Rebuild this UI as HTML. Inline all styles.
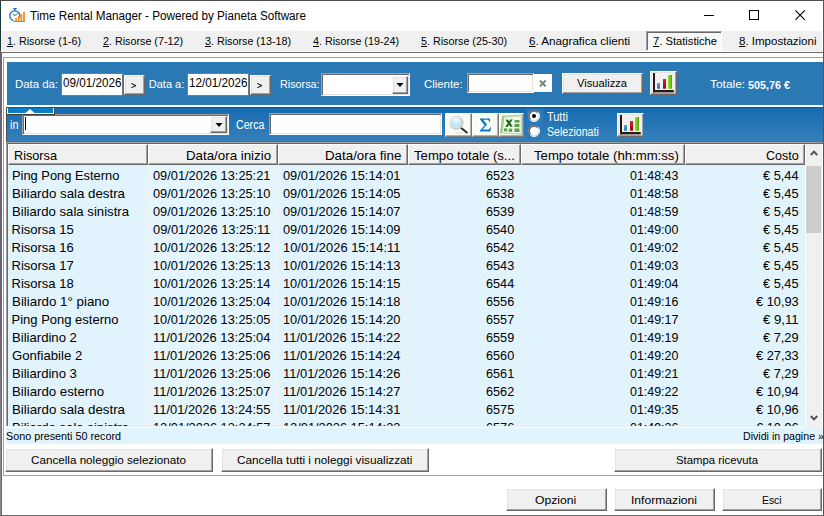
<!DOCTYPE html>
<html><head><meta charset="utf-8"><title>Time Rental Manager</title>
<style>
html,body{margin:0;padding:0;background:#fff;}
body{width:824px;height:516px;overflow:hidden;position:relative;font-family:"Liberation Sans",sans-serif;}
#w{position:absolute;left:0;top:0;width:824px;height:516px;overflow:hidden;background:#fff;}
#w div,#w span.t,#w svg{position:absolute;}
.t{line-height:16px;white-space:pre;transform-origin:0 0;}
.t u{text-decoration:underline;text-decoration-thickness:1px;text-underline-offset:0.5px;}
.btn{background:#f0f0f0;box-sizing:border-box;border:1px solid;border-color:#fff #696969 #696969 #fff;box-shadow:inset -1px -1px 0 #a0a0a0,inset 1px 1px 0 #e3e3e3;}
.ibtn{background:#fbfbf5;box-sizing:border-box;border:1px solid;border-color:#fff #7c7c7c #7c7c7c #fff;box-shadow:inset -1px -1px 0 #b0b0ac;}
.sunk{background:#fff;box-sizing:border-box;border:1px solid;border-color:#a0a0a0 #fff #fff #a0a0a0;box-shadow:inset 1px 1px 0 #696969,inset -1px -1px 0 #e3e3e3;}
.hd{background:#f0f0f0;box-sizing:border-box;border:1px solid;border-color:#fff #696969 #696969 #fff;box-shadow:inset -1px -1px 0 #a0a0a0;}
</style></head>
<body><div id="w">
<div style="left:0px;top:0px;width:824px;height:1px;background:#4d4d4d;"></div>
<div style="left:0px;top:1px;width:1px;height:515px;background:linear-gradient(#1c3a3c 0,#1c3a3c 9%,#6b6072 10%,#6b6072 60%,#8a8a8a 88%);"></div>
<div style="left:823px;top:0px;width:1px;height:516px;background:#555;"></div>
<div style="left:0px;top:515px;width:824px;height:1px;background:#696969;"></div>
<div style="left:1px;top:31px;width:821px;height:20px;background:#f0f0f0;"></div>
<div style="left:646px;top:31px;width:76px;height:20px;background:#f8f8f8;box-sizing:border-box;border:1px solid;border-color:#a0a0a0 #fff #fff #a0a0a0;box-shadow:inset 1px 1px 0 #696969;"></div>
<div style="left:1px;top:52px;width:822px;height:1px;background:#696969;"></div>
<div style="left:1px;top:52px;width:1px;height:463px;background:#696969;"></div>
<div style="left:3px;top:57px;width:820px;height:1px;background:#a0a0a0;"></div>
<div style="left:3px;top:57px;width:1px;height:419px;background:#a0a0a0;"></div>
<div style="left:3px;top:475px;width:820px;height:1px;background:#a0a0a0;"></div>
<div style="left:7px;top:62px;width:816px;height:43px;background:#2a78b4;"></div>
<div style="left:6px;top:107px;width:817px;height:1px;background:#4a4a4a;"></div>
<div style="left:6px;top:107px;width:1px;height:35px;background:#4a4a4a;"></div>
<div style="left:7px;top:108px;width:816px;height:33px;background:linear-gradient(#186bb2,#3580b9);"></div>
<div style="left:7px;top:108px;width:47px;height:6px;background:#0b7cc6;box-sizing:border-box;border:1px solid #fff;border-top:0;"></div>
<div style="left:54px;top:108px;width:1px;height:7px;background:#4a4a4a;"></div>
<svg style="left:25px;top:109px" width="10" height="4" viewBox="0 0 10 4"><path d="M0.5 4 L5 0 L9.5 4Z" fill="#fffff4"/></svg>
<div style="left:7px;top:114px;width:47px;height:1px;background:#3a3a3a;"></div>
<div style="left:7px;top:141px;width:816px;height:1px;background:#696969;"></div>
<div style="left:6px;top:142px;width:817px;height:1px;background:#a0a0a0;"></div>
<div style="left:7px;top:143px;width:816px;height:1px;background:#696969;"></div>
<div style="left:61px;top:73px;width:62px;height:23px;background:#fff;box-sizing:border-box;border:1px solid #7a7a7a;"></div>
<div class="btn" style="left:124px;top:75px;width:21px;height:20px;"></div>
<div style="left:187px;top:73px;width:62px;height:23px;background:#fff;box-sizing:border-box;border:1px solid #7a7a7a;"></div>
<div class="btn" style="left:250px;top:75px;width:21px;height:20px;"></div>
<svg style="left:130px;top:82px" width="8" height="7" viewBox="0 0 8 7"><path d="M1.3 1.5 L6 3.6 L1.3 5.7" fill="none" stroke="#000" stroke-width="1"/></svg>
<svg style="left:256px;top:82px" width="8" height="7" viewBox="0 0 8 7"><path d="M1.3 1.5 L6 3.6 L1.3 5.7" fill="none" stroke="#000" stroke-width="1"/></svg>
<div class="sunk" style="left:321px;top:73px;width:89px;height:23px;"></div>
<div class="btn" style="left:392px;top:76px;width:16px;height:18px;"></div>
<svg style="left:396px;top:83px" width="8" height="4" viewBox="0 0 8 4"><path d="M0.5 0 L7.5 0 L4 4Z" fill="#000"/></svg>
<div class="sunk" style="left:467px;top:73px;width:67px;height:20px;"></div>
<div style="left:534px;top:74px;width:18px;height:18px;background:#fff;"></div>
<svg style="left:539px;top:80px" width="8" height="7" viewBox="0 0 8 7"><path d="M1 0.5 L6.6 6.5 M6.6 0.5 L1 6.5" fill="none" stroke="#6f8670" stroke-width="1.9"/></svg>
<div class="btn" style="left:562px;top:73px;width:81px;height:21px;"></div>
<div class="btn" style="left:650px;top:71px;width:27px;height:24px;"></div>
<svg style="left:650px;top:71px" width="27" height="24" viewBox="0 0 27 24">
<defs><linearGradient id="g1" x1="0" x2="1"><stop offset="0" stop-color="#96e022"/><stop offset="1" stop-color="#55a812"/></linearGradient>
<linearGradient id="b1" x1="0" x2="0" y1="0" y2="1"><stop offset="0" stop-color="#52acdc"/><stop offset="1" stop-color="#1a78b0"/></linearGradient>
<linearGradient id="r1" x1="0" x2="0" y1="0" y2="1"><stop offset="0" stop-color="#d82424"/><stop offset="1" stop-color="#8e0808"/></linearGradient></defs>
<rect x="3" y="2" width="2" height="19.4" fill="#2a1818"/><rect x="3" y="19" width="20.8" height="2.4" fill="#2a1818"/>
<rect x="7" y="12" width="3" height="5.7" fill="url(#b1)"/><rect x="13" y="8" width="3" height="9.7" fill="url(#r1)"/>
<path d="M18 5 L19 4 L22 4 L22 17.8 L18 17.8Z" fill="url(#g1)"/></svg>
<div class="sunk" style="left:22px;top:114px;width:207px;height:21px;"></div>
<div style="left:22px;top:114px;width:33px;height:1px;background:#3a3a3a;"></div>
<div class="btn" style="left:210px;top:116px;width:17px;height:17px;"></div>
<svg style="left:214.6px;top:122.8px" width="8" height="4" viewBox="0 0 8 4"><path d="M0.5 0 L7.5 0 L4 4Z" fill="#000"/></svg>
<div style="left:25px;top:117px;width:1px;height:13px;background:#000;"></div>
<div class="sunk" style="left:269px;top:113px;width:173px;height:22px;"></div>
<div class="ibtn" style="left:445px;top:113px;width:27px;height:24px;"></div>
<div class="ibtn" style="left:472px;top:113px;width:27px;height:24px;"></div>
<div class="ibtn" style="left:499px;top:113px;width:25px;height:24px;"></div>
<svg style="left:445px;top:113px" width="27" height="24" viewBox="0 0 27 24">
<defs><radialGradient id="lens" cx="0.5" cy="0.3" r="0.75"><stop offset="0" stop-color="#eef9fe"/><stop offset="0.55" stop-color="#bde5f6"/><stop offset="1" stop-color="#cfeaf6"/></radialGradient>
<linearGradient id="ring" x1="0" y1="0" x2="1" y2="1"><stop offset="0" stop-color="#ececec"/><stop offset="1" stop-color="#c4c4c4"/></linearGradient></defs>
<ellipse cx="14" cy="19.7" rx="4.6" ry="0.8" fill="#e2e2de"/>
<path d="M16.2 15 L21.8 19.6" stroke="#2b2b2b" stroke-width="2" stroke-linecap="round"/>
<circle cx="11.3" cy="9.7" r="6.3" fill="url(#lens)" stroke="url(#ring)" stroke-width="1.9"/>
<path d="M7.2 8.2 A4.4 4.4 0 0 1 15.4 8.2 A6 3 0 0 0 7.2 8.2Z" fill="#f4fbfe" opacity="0.8"/>
</svg>
<svg style="left:472px;top:113px" width="27" height="24" viewBox="0 0 27 24"><path d="M8 5.6 H18 V9 H17.2 C17 7.4 16.4 6.8 14.6 6.8 H11.2 L15 11.6 L10.6 16.6 H15 C17.2 16.6 17.8 15.8 18.2 14.2 H19 L18.4 18.4 H8 V17.6 L12.6 12.2 L8 6.4 Z" fill="#0b79c8"/></svg>
<svg style="left:498px;top:113px" width="26" height="24" viewBox="0 0 26 24">
<path d="M4.2 2.6 L24 1.4 L24 21.8 L2.2 20.4 Z" fill="#bcd9a5"/>
<path d="M2.2 20.4 L4.2 2.6 L6 3.4 L4.4 19.6 Z" fill="#9cc881"/>
<path d="M6.4 4.6 L22.8 3.4 L22.8 20.4 L4.8 19.2 Z" fill="#f3f8ee"/>
<path d="M7.4 6.8 L10 6.6 L14.8 13.6 L12.2 13.8 Z M12.4 6.5 L14.8 6.3 L9.6 14 L7.2 13.9 Z" fill="#236a23"/>
<g fill="#55a54f"><rect x="16.5" y="7" width="5" height="2.6"/><rect x="16.5" y="11" width="5" height="3"/>
<rect x="16.5" y="15.5" width="5" height="3.5"/><rect x="10.6" y="15.6" width="3.6" height="3.2"/><rect x="6" y="15.4" width="3.2" height="3"/></g>
</svg>
<div style="left:527px;top:109px;width:16px;height:30px;background:#2d78b6;"></div>
<svg style="left:528px;top:110px" width="12" height="12" viewBox="0 0 12 12">
<circle cx="6" cy="6" r="5" fill="#fff"/>
<path d="M2.1 9.9 A5.5 5.5 0 0 1 9.9 2.1" fill="none" stroke="#808080" stroke-width="1"/>
<path d="M2.8 9.2 A4.5 4.5 0 0 1 9.2 2.8" fill="none" stroke="#505050" stroke-width="0.9"/>
<path d="M9.9 2.1 A5.5 5.5 0 0 1 2.1 9.9" fill="none" stroke="#fff" stroke-width="1"/>
<path d="M9.2 2.8 A4.5 4.5 0 0 1 2.8 9.2" fill="none" stroke="#e3e3e3" stroke-width="1"/>
<circle cx="6" cy="6" r="2" fill="#000"/></svg>
<svg style="left:528px;top:125px" width="12" height="12" viewBox="0 0 12 12">
<circle cx="6" cy="6" r="5" fill="#fff"/>
<path d="M2.1 9.9 A5.5 5.5 0 0 1 9.9 2.1" fill="none" stroke="#808080" stroke-width="1"/>
<path d="M2.8 9.2 A4.5 4.5 0 0 1 9.2 2.8" fill="none" stroke="#505050" stroke-width="0.9"/>
<path d="M9.9 2.1 A5.5 5.5 0 0 1 2.1 9.9" fill="none" stroke="#fff" stroke-width="1"/>
<path d="M9.2 2.8 A4.5 4.5 0 0 1 2.8 9.2" fill="none" stroke="#e3e3e3" stroke-width="1"/>
</svg>
<div class="btn" style="left:617px;top:113px;width:27px;height:24px;"></div>
<svg style="left:617px;top:113px" width="27" height="24" viewBox="0 0 27 24">
<defs><linearGradient id="g2" x1="0" x2="1"><stop offset="0" stop-color="#96e022"/><stop offset="1" stop-color="#55a812"/></linearGradient>
<linearGradient id="b2" x1="0" x2="0" y1="0" y2="1"><stop offset="0" stop-color="#52acdc"/><stop offset="1" stop-color="#1a78b0"/></linearGradient>
<linearGradient id="r2" x1="0" x2="0" y1="0" y2="1"><stop offset="0" stop-color="#d82424"/><stop offset="1" stop-color="#8e0808"/></linearGradient></defs>
<rect x="3" y="2" width="2" height="19.4" fill="#2a1818"/><rect x="3" y="19" width="20.8" height="2.4" fill="#2a1818"/>
<rect x="7" y="12" width="3" height="5.7" fill="url(#b2)"/><rect x="13" y="8" width="3" height="9.7" fill="url(#r2)"/>
<path d="M18 5 L19 4 L22 4 L22 17.8 L18 17.8Z" fill="url(#g2)"/></svg>
<div style="left:6px;top:143px;width:1px;height:283px;background:#a0a0a0;"></div>
<div style="left:7px;top:144px;width:1px;height:282px;background:#696969;"></div>
<div style="left:8px;top:165px;width:140px;height:261px;background:#e1f3fd;"></div>
<div class="hd" style="left:8px;top:144px;width:140px;height:21px;"></div>
<div style="left:148px;top:165px;width:130px;height:261px;background:#e5f5fd;"></div>
<div class="hd" style="left:148px;top:144px;width:130px;height:21px;"></div>
<div style="left:278px;top:165px;width:130px;height:261px;background:#e1f3fd;"></div>
<div class="hd" style="left:278px;top:144px;width:130px;height:21px;"></div>
<div style="left:408px;top:165px;width:113px;height:261px;background:#e1f3fd;"></div>
<div class="hd" style="left:408px;top:144px;width:113px;height:21px;"></div>
<div style="left:521px;top:165px;width:164px;height:261px;background:#e1f3fd;"></div>
<div class="hd" style="left:521px;top:144px;width:164px;height:21px;"></div>
<div style="left:685px;top:165px;width:120px;height:261px;background:#e1f3fd;"></div>
<div class="hd" style="left:685px;top:144px;width:120px;height:21px;"></div>
<div style="left:8px;top:183px;width:797px;height:1px;background:#eef0f1;"></div>
<div style="left:8px;top:201px;width:797px;height:1px;background:#eef0f1;"></div>
<div style="left:8px;top:219px;width:797px;height:1px;background:#eef0f1;"></div>
<div style="left:8px;top:237px;width:797px;height:1px;background:#eef0f1;"></div>
<div style="left:8px;top:255px;width:797px;height:1px;background:#eef0f1;"></div>
<div style="left:8px;top:273px;width:797px;height:1px;background:#eef0f1;"></div>
<div style="left:8px;top:291px;width:797px;height:1px;background:#eef0f1;"></div>
<div style="left:8px;top:309px;width:797px;height:1px;background:#eef0f1;"></div>
<div style="left:8px;top:327px;width:797px;height:1px;background:#eef0f1;"></div>
<div style="left:8px;top:345px;width:797px;height:1px;background:#eef0f1;"></div>
<div style="left:8px;top:363px;width:797px;height:1px;background:#eef0f1;"></div>
<div style="left:8px;top:381px;width:797px;height:1px;background:#eef0f1;"></div>
<div style="left:8px;top:399px;width:797px;height:1px;background:#eef0f1;"></div>
<div style="left:8px;top:417px;width:797px;height:1px;background:#eef0f1;"></div>
<div style="left:148px;top:165px;width:1px;height:261px;background:#eef0f1;"></div>
<div style="left:278px;top:165px;width:1px;height:261px;background:#eef0f1;"></div>
<div style="left:408px;top:165px;width:1px;height:261px;background:#eef0f1;"></div>
<div style="left:521px;top:165px;width:1px;height:261px;background:#eef0f1;"></div>
<div style="left:685px;top:165px;width:1px;height:261px;background:#eef0f1;"></div>
<div style="left:8px;top:426px;width:797px;height:1px;background:#e6eef2;"></div>
<div style="left:805px;top:144px;width:17px;height:284px;background:#f0f0f0;"></div>
<div style="left:805px;top:144px;width:1px;height:284px;background:#fff;"></div>
<div style="left:806px;top:166px;width:15px;height:67px;background:#cdcdcd;"></div>
<svg style="left:810px;top:150px" width="8" height="6" viewBox="0 0 8 6"><path d="M0.8 5 L4 1.6 L7.2 5" fill="none" stroke="#505050" stroke-width="1.9"/></svg>
<svg style="left:810px;top:415px" width="8" height="6" viewBox="0 0 8 6"><path d="M0.8 1 L4 4.4 L7.2 1" fill="none" stroke="#505050" stroke-width="1.9"/></svg>
<div style="left:6px;top:428px;width:817px;height:16px;background:#e1f3fd;"></div>
<div class="btn" style="left:5px;top:448px;width:208px;height:24px;"></div>
<div class="btn" style="left:221px;top:448px;width:208px;height:24px;"></div>
<div class="btn" style="left:614px;top:448px;width:208px;height:24px;"></div>
<div class="btn" style="left:506px;top:488px;width:101px;height:23px;"></div>
<div class="btn" style="left:614px;top:488px;width:101px;height:23px;"></div>
<div class="btn" style="left:722px;top:488px;width:100px;height:23px;"></div>
<svg style="left:8px;top:7px" width="19" height="16" viewBox="8 7 19 16">
<circle cx="14.8" cy="15.8" r="5" fill="#fff" stroke="#1b6fc2" stroke-width="1.3"/>
<rect x="13.3" y="8" width="3.4" height="1.3" fill="#1b6fc2"/><rect x="14.2" y="9" width="1.4" height="1.6" fill="#1b6fc2"/>
<path d="M12.8 14 L14.8 15.6 L17.6 13.4" fill="none" stroke="#2a4a60" stroke-width="0.9"/>
<rect x="13.5" y="18" width="13" height="4" fill="#fff"/>
<g fill="#f7901e"><rect x="15.2" y="17.8" width="1.8" height="3"/><rect x="17.9" y="16" width="1.8" height="4.8"/>
<rect x="20.5" y="14" width="1.8" height="6.8"/><rect x="23.1" y="12" width="1.8" height="8.8"/></g>
<rect x="13.6" y="20.9" width="11.6" height="0.9" fill="#3a7ec4"/>
</svg>
<div style="left:704px;top:15px;width:10px;height:1px;background:#000;"></div>
<div style="left:749px;top:10px;width:10px;height:10px;box-sizing:border-box;border:1px solid #000;"></div>
<svg style="left:794px;top:9px" width="12" height="12" viewBox="0 0 12 12"><path d="M1.4 1.4 L10.8 10.8 M10.8 1.4 L1.4 10.8" stroke="#000" stroke-width="1.1" fill="none"/></svg>
<div style="left:0;top:0;width:805px;height:426px;overflow:hidden;">
<span class="t" id="t28" style="left:11.50px;top:167.50px;font-size:13px;color:#000;transform:scaleX(0.9907);">Ping Pong Esterno</span>
<span class="t" id="t29" style="left:153.10px;top:167.50px;font-size:13px;color:#000;transform:scaleX(0.9842);">09/01/2026 13:25:21</span>
<span class="t" id="t30" style="left:283.10px;top:167.50px;font-size:13px;color:#000;transform:scaleX(0.9842);">09/01/2026 15:14:01</span>
<span class="t" id="t31" style="left:486.30px;top:167.50px;font-size:13px;color:#000;transform:scaleX(0.9750);">6523</span>
<span class="t" id="t32" style="left:630.20px;top:167.50px;font-size:13px;color:#000;transform:scaleX(0.9563);">01:48:43</span>
<span class="t" id="t33" style="left:763.10px;top:167.50px;font-size:13px;color:#000;transform:scaleX(0.9846);">€ 5,44</span>
<span class="t" id="t34" style="left:11.50px;top:185.50px;font-size:13px;color:#000;transform:scaleX(1.0220);">Biliardo sala destra</span>
<span class="t" id="t35" style="left:153.10px;top:185.50px;font-size:13px;color:#000;transform:scaleX(0.9842);">09/01/2026 13:25:10</span>
<span class="t" id="t36" style="left:283.10px;top:185.50px;font-size:13px;color:#000;transform:scaleX(0.9842);">09/01/2026 15:14:05</span>
<span class="t" id="t37" style="left:486.30px;top:185.50px;font-size:13px;color:#000;transform:scaleX(0.9750);">6538</span>
<span class="t" id="t38" style="left:630.20px;top:185.50px;font-size:13px;color:#000;transform:scaleX(0.9563);">01:48:58</span>
<span class="t" id="t39" style="left:763.10px;top:185.50px;font-size:13px;color:#000;transform:scaleX(0.9846);">€ 5,45</span>
<span class="t" id="t40" style="left:11.50px;top:203.50px;font-size:13px;color:#000;transform:scaleX(1.0120);">Biliardo sala sinistra</span>
<span class="t" id="t41" style="left:153.10px;top:203.50px;font-size:13px;color:#000;transform:scaleX(0.9842);">09/01/2026 13:25:10</span>
<span class="t" id="t42" style="left:283.10px;top:203.50px;font-size:13px;color:#000;transform:scaleX(0.9842);">09/01/2026 15:14:07</span>
<span class="t" id="t43" style="left:486.30px;top:203.50px;font-size:13px;color:#000;transform:scaleX(0.9750);">6539</span>
<span class="t" id="t44" style="left:630.20px;top:203.50px;font-size:13px;color:#000;transform:scaleX(0.9563);">01:48:59</span>
<span class="t" id="t45" style="left:763.10px;top:203.50px;font-size:13px;color:#000;transform:scaleX(0.9846);">€ 5,45</span>
<span class="t" id="t46" style="left:11.50px;top:221.50px;font-size:13px;color:#000;">Risorsa 15</span>
<span class="t" id="t47" style="left:153.10px;top:221.50px;font-size:13px;color:#000;transform:scaleX(0.9922);">09/01/2026 13:25:11</span>
<span class="t" id="t48" style="left:283.10px;top:221.50px;font-size:13px;color:#000;transform:scaleX(0.9842);">09/01/2026 15:14:09</span>
<span class="t" id="t49" style="left:486.30px;top:221.50px;font-size:13px;color:#000;transform:scaleX(0.9750);">6540</span>
<span class="t" id="t50" style="left:630.20px;top:221.50px;font-size:13px;color:#000;transform:scaleX(0.9563);">01:49:00</span>
<span class="t" id="t51" style="left:763.10px;top:221.50px;font-size:13px;color:#000;transform:scaleX(0.9846);">€ 5,45</span>
<span class="t" id="t52" style="left:11.50px;top:239.50px;font-size:13px;color:#000;">Risorsa 16</span>
<span class="t" id="t53" style="left:153.10px;top:239.50px;font-size:13px;color:#000;transform:scaleX(0.9842);">10/01/2026 13:25:12</span>
<span class="t" id="t54" style="left:283.10px;top:239.50px;font-size:13px;color:#000;transform:scaleX(0.9922);">10/01/2026 15:14:11</span>
<span class="t" id="t55" style="left:486.30px;top:239.50px;font-size:13px;color:#000;transform:scaleX(0.9750);">6542</span>
<span class="t" id="t56" style="left:630.20px;top:239.50px;font-size:13px;color:#000;transform:scaleX(0.9563);">01:49:02</span>
<span class="t" id="t57" style="left:763.10px;top:239.50px;font-size:13px;color:#000;transform:scaleX(0.9846);">€ 5,45</span>
<span class="t" id="t58" style="left:11.50px;top:257.50px;font-size:13px;color:#000;">Risorsa 17</span>
<span class="t" id="t59" style="left:153.10px;top:257.50px;font-size:13px;color:#000;transform:scaleX(0.9842);">10/01/2026 13:25:13</span>
<span class="t" id="t60" style="left:283.10px;top:257.50px;font-size:13px;color:#000;transform:scaleX(0.9842);">10/01/2026 15:14:13</span>
<span class="t" id="t61" style="left:486.30px;top:257.50px;font-size:13px;color:#000;transform:scaleX(0.9750);">6543</span>
<span class="t" id="t62" style="left:630.20px;top:257.50px;font-size:13px;color:#000;transform:scaleX(0.9563);">01:49:03</span>
<span class="t" id="t63" style="left:763.10px;top:257.50px;font-size:13px;color:#000;transform:scaleX(0.9846);">€ 5,45</span>
<span class="t" id="t64" style="left:11.50px;top:275.50px;font-size:13px;color:#000;">Risorsa 18</span>
<span class="t" id="t65" style="left:153.10px;top:275.50px;font-size:13px;color:#000;transform:scaleX(0.9842);">10/01/2026 13:25:14</span>
<span class="t" id="t66" style="left:283.10px;top:275.50px;font-size:13px;color:#000;transform:scaleX(0.9842);">10/01/2026 15:14:15</span>
<span class="t" id="t67" style="left:486.30px;top:275.50px;font-size:13px;color:#000;transform:scaleX(0.9750);">6544</span>
<span class="t" id="t68" style="left:630.20px;top:275.50px;font-size:13px;color:#000;transform:scaleX(0.9563);">01:49:04</span>
<span class="t" id="t69" style="left:763.10px;top:275.50px;font-size:13px;color:#000;transform:scaleX(0.9846);">€ 5,45</span>
<span class="t" id="t70" style="left:11.50px;top:293.50px;font-size:13px;color:#000;transform:scaleX(1.0240);">Biliardo 1° piano</span>
<span class="t" id="t71" style="left:153.10px;top:293.50px;font-size:13px;color:#000;transform:scaleX(0.9842);">10/01/2026 13:25:04</span>
<span class="t" id="t72" style="left:283.10px;top:293.50px;font-size:13px;color:#000;transform:scaleX(0.9842);">10/01/2026 15:14:18</span>
<span class="t" id="t73" style="left:486.30px;top:293.50px;font-size:13px;color:#000;transform:scaleX(0.9750);">6556</span>
<span class="t" id="t74" style="left:630.20px;top:293.50px;font-size:13px;color:#000;transform:scaleX(0.9563);">01:49:16</span>
<span class="t" id="t75" style="left:756.00px;top:293.50px;font-size:13px;color:#000;transform:scaleX(0.9844);">€ 10,93</span>
<span class="t" id="t76" style="left:11.50px;top:311.50px;font-size:13px;color:#000;">Ping Pong esterno</span>
<span class="t" id="t77" style="left:153.10px;top:311.50px;font-size:13px;color:#000;transform:scaleX(0.9842);">10/01/2026 13:25:05</span>
<span class="t" id="t78" style="left:283.10px;top:311.50px;font-size:13px;color:#000;transform:scaleX(0.9842);">10/01/2026 15:14:20</span>
<span class="t" id="t79" style="left:486.30px;top:311.50px;font-size:13px;color:#000;transform:scaleX(0.9750);">6557</span>
<span class="t" id="t80" style="left:630.20px;top:311.50px;font-size:13px;color:#000;transform:scaleX(0.9563);">01:49:17</span>
<span class="t" id="t81" style="left:763.10px;top:311.50px;font-size:13px;color:#000;transform:scaleX(1.0117);">€ 9,11</span>
<span class="t" id="t82" style="left:11.50px;top:329.50px;font-size:13px;color:#000;transform:scaleX(1.0089);">Biliardino 2</span>
<span class="t" id="t83" style="left:153.10px;top:329.50px;font-size:13px;color:#000;transform:scaleX(0.9922);">11/01/2026 13:25:04</span>
<span class="t" id="t84" style="left:283.10px;top:329.50px;font-size:13px;color:#000;transform:scaleX(0.9922);">11/01/2026 15:14:22</span>
<span class="t" id="t85" style="left:486.30px;top:329.50px;font-size:13px;color:#000;transform:scaleX(0.9750);">6559</span>
<span class="t" id="t86" style="left:630.20px;top:329.50px;font-size:13px;color:#000;transform:scaleX(0.9563);">01:49:19</span>
<span class="t" id="t87" style="left:763.10px;top:329.50px;font-size:13px;color:#000;transform:scaleX(0.9846);">€ 7,29</span>
<span class="t" id="t88" style="left:11.50px;top:347.50px;font-size:13px;color:#000;transform:scaleX(1.0117);">Gonfiabile 2</span>
<span class="t" id="t89" style="left:153.10px;top:347.50px;font-size:13px;color:#000;transform:scaleX(0.9922);">11/01/2026 13:25:06</span>
<span class="t" id="t90" style="left:283.10px;top:347.50px;font-size:13px;color:#000;transform:scaleX(0.9922);">11/01/2026 15:14:24</span>
<span class="t" id="t91" style="left:486.30px;top:347.50px;font-size:13px;color:#000;transform:scaleX(0.9750);">6560</span>
<span class="t" id="t92" style="left:630.20px;top:347.50px;font-size:13px;color:#000;transform:scaleX(0.9563);">01:49:20</span>
<span class="t" id="t93" style="left:756.00px;top:347.50px;font-size:13px;color:#000;transform:scaleX(0.9844);">€ 27,33</span>
<span class="t" id="t94" style="left:11.50px;top:365.50px;font-size:13px;color:#000;transform:scaleX(1.0089);">Biliardino 3</span>
<span class="t" id="t95" style="left:153.10px;top:365.50px;font-size:13px;color:#000;transform:scaleX(0.9922);">11/01/2026 13:25:06</span>
<span class="t" id="t96" style="left:283.10px;top:365.50px;font-size:13px;color:#000;transform:scaleX(0.9922);">11/01/2026 15:14:26</span>
<span class="t" id="t97" style="left:486.30px;top:365.50px;font-size:13px;color:#000;transform:scaleX(0.9750);">6561</span>
<span class="t" id="t98" style="left:630.20px;top:365.50px;font-size:13px;color:#000;transform:scaleX(0.9563);">01:49:21</span>
<span class="t" id="t99" style="left:763.10px;top:365.50px;font-size:13px;color:#000;transform:scaleX(0.9846);">€ 7,29</span>
<span class="t" id="t100" style="left:11.50px;top:383.50px;font-size:13px;color:#000;transform:scaleX(1.0185);">Biliardo esterno</span>
<span class="t" id="t101" style="left:153.10px;top:383.50px;font-size:13px;color:#000;transform:scaleX(0.9922);">11/01/2026 13:25:07</span>
<span class="t" id="t102" style="left:283.10px;top:383.50px;font-size:13px;color:#000;transform:scaleX(0.9922);">11/01/2026 15:14:27</span>
<span class="t" id="t103" style="left:486.30px;top:383.50px;font-size:13px;color:#000;transform:scaleX(0.9750);">6562</span>
<span class="t" id="t104" style="left:630.20px;top:383.50px;font-size:13px;color:#000;transform:scaleX(0.9563);">01:49:22</span>
<span class="t" id="t105" style="left:756.00px;top:383.50px;font-size:13px;color:#000;transform:scaleX(0.9844);">€ 10,94</span>
<span class="t" id="t106" style="left:11.50px;top:401.50px;font-size:13px;color:#000;transform:scaleX(1.0220);">Biliardo sala destra</span>
<span class="t" id="t107" style="left:153.10px;top:401.50px;font-size:13px;color:#000;transform:scaleX(0.9922);">11/01/2026 13:24:55</span>
<span class="t" id="t108" style="left:283.10px;top:401.50px;font-size:13px;color:#000;transform:scaleX(0.9922);">11/01/2026 15:14:31</span>
<span class="t" id="t109" style="left:486.30px;top:401.50px;font-size:13px;color:#000;transform:scaleX(0.9750);">6575</span>
<span class="t" id="t110" style="left:630.20px;top:401.50px;font-size:13px;color:#000;transform:scaleX(0.9563);">01:49:35</span>
<span class="t" id="t111" style="left:756.00px;top:401.50px;font-size:13px;color:#000;transform:scaleX(0.9844);">€ 10,96</span>
<span class="t" id="t112" style="left:11.50px;top:419.50px;font-size:13px;color:#000;transform:scaleX(1.0120);">Biliardo sala sinistra</span>
<span class="t" id="t113" style="left:153.10px;top:419.50px;font-size:13px;color:#000;transform:scaleX(0.9842);">12/01/2026 13:24:57</span>
<span class="t" id="t114" style="left:283.10px;top:419.50px;font-size:13px;color:#000;transform:scaleX(0.9842);">12/01/2026 15:14:33</span>
<span class="t" id="t115" style="left:486.30px;top:419.50px;font-size:13px;color:#000;transform:scaleX(0.9750);">6576</span>
<span class="t" id="t116" style="left:630.20px;top:419.50px;font-size:13px;color:#000;transform:scaleX(0.9563);">01:49:36</span>
<span class="t" id="t117" style="left:756.00px;top:419.50px;font-size:13px;color:#000;transform:scaleX(0.9844);">€ 10,96</span>
</div>
<span class="t" id="t0" style="left:30.30px;top:7.84px;font-size:12px;color:#000;transform:scaleX(0.9728);">Time Rental Manager - Powered by Pianeta Software</span>
<span class="t" id="t1" style="left:7.30px;top:33.19px;font-size:11px;color:#000;transform:scaleX(0.9761);"><u>1</u>. Risorse (1-6)</span>
<span class="t" id="t2" style="left:103.30px;top:33.19px;font-size:11px;color:#000;transform:scaleX(0.9765);"><u>2</u>. Risorse (7-12)</span>
<span class="t" id="t3" style="left:205.30px;top:33.19px;font-size:11px;color:#000;transform:scaleX(0.9768);"><u>3</u>. Risorse (13-18)</span>
<span class="t" id="t4" style="left:313.30px;top:33.19px;font-size:11px;color:#000;transform:scaleX(0.9768);"><u>4</u>. Risorse (19-24)</span>
<span class="t" id="t5" style="left:421.30px;top:33.19px;font-size:11px;color:#000;transform:scaleX(0.9768);"><u>5</u>. Risorse (25-30)</span>
<span class="t" id="t6" style="left:529.30px;top:33.19px;font-size:11px;color:#000;transform:scaleX(1.0586);"><u>6</u>. Anagrafica clienti</span>
<span class="t" id="t7" style="left:653.30px;top:33.19px;font-size:11px;color:#000;transform:scaleX(1.0161);"><u>7</u>. Statistiche</span>
<span class="t" id="t8" style="left:739.30px;top:33.19px;font-size:11px;color:#000;transform:scaleX(1.0473);"><u>8</u>. Impostazioni</span>
<span class="t" id="t9" style="left:14.80px;top:76.19px;font-size:11px;color:#fff;transform:scaleX(1.0338);">Data da:</span>
<span class="t" id="t10" style="left:62.80px;top:74.50px;font-size:13px;color:#000;transform:scaleX(0.8989);">09/01/2026</span>
<span class="t" id="t11" style="left:148.80px;top:76.19px;font-size:11px;color:#fff;">Data a:</span>
<span class="t" id="t12" style="left:188.80px;top:74.50px;font-size:13px;color:#000;transform:scaleX(0.8989);">12/01/2026</span>
<span class="t" id="t13" style="left:280.30px;top:76.19px;font-size:11px;color:#fff;transform:scaleX(0.9791);">Risorsa:</span>
<span class="t" id="t14" style="left:423.90px;top:76.19px;font-size:11px;color:#fff;transform:scaleX(1.0349);">Cliente:</span>
<span class="t" id="t15" style="left:576.80px;top:75.19px;font-size:11px;color:#000;transform:scaleX(1.0136);">Visualizza</span>
<span class="t" id="t16" style="left:709.60px;top:76.19px;font-size:11px;color:#fff;transform:scaleX(1.0857);">Totale:</span>
<span class="t" id="t17" style="left:747.80px;top:77.19px;font-size:11px;color:#fff;font-weight:bold;transform:scaleX(0.9807);">505,76 €</span>
<span class="t" id="t18" style="left:9.90px;top:116.84px;font-size:12px;color:#fff;transform:scaleX(0.8990);">in</span>
<span class="t" id="t19" style="left:236.10px;top:116.84px;font-size:12px;color:#fff;transform:scaleX(0.8871);">Cerca</span>
<span class="t" id="t20" style="left:546.60px;top:108.84px;font-size:12px;color:#fff;transform:scaleX(0.9124);">Tutti</span>
<span class="t" id="t21" style="left:546.80px;top:123.84px;font-size:12px;color:#fff;transform:scaleX(0.8822);">Selezionati</span>
<span class="t" id="t22" style="left:14.30px;top:147.50px;font-size:13px;color:#000;transform:scaleX(0.9755);">Risorsa</span>
<span class="t" id="t23" style="left:186.00px;top:147.50px;font-size:13px;color:#000;transform:scaleX(1.0240);">Data/ora inizio</span>
<span class="t" id="t24" style="left:324.80px;top:147.50px;font-size:13px;color:#000;transform:scaleX(1.0250);">Data/ora fine</span>
<span class="t" id="t25" style="left:413.90px;top:147.50px;font-size:13px;color:#000;transform:scaleX(1.0108);">Tempo totale (s...</span>
<span class="t" id="t26" style="left:534.30px;top:147.50px;font-size:13px;color:#000;transform:scaleX(1.0123);">Tempo totale (hh:mm:ss)</span>
<span class="t" id="t27" style="left:765.60px;top:147.50px;font-size:13px;color:#000;transform:scaleX(0.9626);">Costo</span>
<span class="t" id="t118" style="left:6.30px;top:428.19px;font-size:11px;color:#000;transform:scaleX(0.9794);">Sono presenti 50 record</span>
<span class="t" id="t119" style="left:742.90px;top:428.19px;font-size:11px;color:#000;transform:scaleX(0.9656);">Dividi in pagine »</span>
<span class="t" id="t120" style="left:31.30px;top:452.19px;font-size:11px;color:#000;transform:scaleX(1.0604);">Cancella noleggio selezionato</span>
<span class="t" id="t121" style="left:236.60px;top:452.19px;font-size:11px;color:#000;transform:scaleX(1.0709);">Cancella tutti i noleggi visualizzati</span>
<span class="t" id="t122" style="left:676.30px;top:452.19px;font-size:11px;color:#000;transform:scaleX(1.0316);">Stampa ricevuta</span>
<span class="t" id="t123" style="left:534.80px;top:492.19px;font-size:11px;color:#000;transform:scaleX(1.1073);">Opzioni</span>
<span class="t" id="t124" style="left:630.70px;top:492.19px;font-size:11px;color:#000;transform:scaleX(1.1014);">Informazioni</span>
<span class="t" id="t125" style="left:761.50px;top:492.19px;font-size:11px;color:#000;transform:scaleX(0.9432);">Esci</span>
</div></body></html>
